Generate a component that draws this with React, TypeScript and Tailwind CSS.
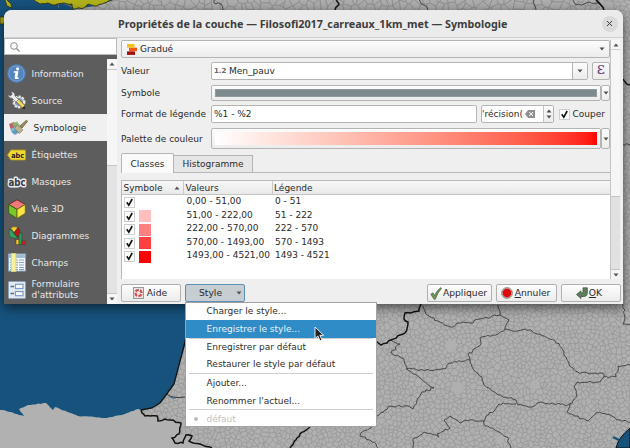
import React from "react";

type Pt = [number, number];

/* Small deterministic generator, so that the map is the same at each load. */
function seeded(seed: number) {
  let s = seed;
  return () => {
    s = (s * 1664525 + 1013904223) % 4294967296;
    return s / 4294967296;
  };
}

/* Part of a polygon that is nearer to a than to b. */
function nearer(poly: Pt[], a: Pt, b: Pt) {
  const nx = b[0] - a[0];
  const ny = b[1] - a[1];
  const c = (nx * (a[0] + b[0]) + ny * (a[1] + b[1])) / 2;
  const out: Pt[] = [];
  for (let i = 0; i < poly.length; i++) {
    const p = poly[i];
    const q = poly[(i + 1) % poly.length];
    const dp = nx * p[0] + ny * p[1] - c;
    const dq = nx * q[0] + ny * q[1] - c;
    if (dp <= 0) out.push(p);
    if (dp * dq < 0) {
      const t = dp / (dp - dq);
      out.push([p[0] + (q[0] - p[0]) * t, p[1] + (q[1] - p[1]) * t]);
    }
  }
  return out;
}

/* Voronoi cells of a grid of shifted seeds. */
function mesh(x0: number, y0: number, x1: number, y1: number, size: number, seed: number) {
  const rnd = seeded(seed);
  const cols = Math.ceil((x1 - x0) / size) + 1;
  const rows = Math.ceil((y1 - y0) / size) + 1;
  const pts: (Pt | null)[][] = [];
  for (let r = 0; r < rows; r++) {
    const line: (Pt | null)[] = [];
    for (let c = 0; c < cols; c++) {
      const x = x0 + (c + rnd()) * size;
      const y = y0 + (r + rnd()) * size;
      line.push(rnd() < 0.16 ? null : [x, y]);
    }
    pts.push(line);
  }
  let d = "";
  for (let r = 0; r < rows; r++) {
    for (let c = 0; c < cols; c++) {
      const a = pts[r][c];
      if (!a) continue;
      const h = size * 2;
      let poly: Pt[] = [[a[0] - h, a[1] - h], [a[0] + h, a[1] - h], [a[0] + h, a[1] + h], [a[0] - h, a[1] + h]];
      for (let i = -3; i <= 3; i++) {
        for (let j = -3; j <= 3; j++) {
          const b = pts[r + i]?.[c + j];
          if (b && (i || j)) poly = nearer(poly, a, b);
        }
      }
      if (poly.length > 2) d += "M" + poly.map((p) => `${p[0].toFixed(1)} ${p[1].toFixed(1)}`).join("L") + "Z";
    }
  }
  return d;
}

/* Polyline broken in short uneven steps, for borders and coasts. */
function rough(pts: Pt[], amp: number, seed: number) {
  const rnd = seeded(seed);
  let d = `M${pts[0][0]} ${pts[0][1]}`;
  for (let i = 1; i < pts.length; i++) {
    const [ax, ay] = pts[i - 1];
    const [bx, by] = pts[i];
    const n = Math.max(1, Math.round(Math.hypot(bx - ax, by - ay) / 2.6));
    for (let k = 1; k <= n; k++) {
      const j = k === n ? 0 : amp;
      d += `L${(ax + ((bx - ax) * k) / n + (rnd() - 0.5) * j).toFixed(1)} ${(ay + ((by - ay) * k) / n + (rnd() - 0.5) * j).toFixed(1)}`;
    }
  }
  return d;
}

const communes = mesh(135, 300, 634, 452, 4.3, 7) + mesh(612, -6, 636, 300, 4.3, 11);
const northCommunes = mesh(72, -10, 612, 18, 7, 5);

const departments: Pt[][] = [
  [[423, 306], [426, 314], [438, 321], [450, 327], [463, 322], [470, 323], [480, 319], [500, 315], [498, 305]],
  [[500, 315], [509, 320], [505, 329], [498, 334], [480, 338], [481, 344], [468, 355], [470, 360], [449, 363], [445, 369], [435, 370], [406, 369]],
  [[505, 329], [512, 331], [525, 329], [540, 334], [555, 341], [563, 350], [569, 364], [578, 372], [590, 374], [602, 373], [604, 377], [616, 377], [618, 366], [630, 365]],
  [[470, 360], [472, 367], [482, 377], [484, 385], [498, 395], [516, 400], [518, 405], [532, 407], [540, 402], [568, 405], [571, 403]],
  [[604, 377], [600, 382], [577, 382], [574, 386], [577, 395], [572, 403], [567, 412], [575, 416], [588, 421], [596, 413], [600, 412], [612, 416], [620, 420], [630, 422]],
  [[516, 404], [499, 404], [494, 411], [486, 416], [484, 421], [465, 420], [460, 423], [455, 419], [450, 416], [444, 420], [450, 428], [444, 431], [437, 434], [439, 437], [432, 434], [424, 432], [414, 438], [413, 448]],
  [[484, 421], [485, 426], [497, 431], [507, 437], [511, 448]],
  [[391, 340], [400, 344], [391, 353], [404, 359], [407, 369], [434, 388], [422, 392], [413, 409], [410, 407], [391, 406], [377, 416]],
  [[623, 304], [625, 318], [623, 324], [630, 324]],
  [[372, 427], [362, 432], [360, 436], [370, 440], [376, 444], [378, 448]],
  [[214, 0], [214, 3], [221, 4], [223, 10]],
  [[419, 0], [424, 5], [428, 10]],
  [[534, 0], [534, 4], [536, 10]],
  [[573, 0], [576, 5], [584, 4], [589, 2], [597, 3], [604, 8]],
  [[620, 144], [630, 145]],
];

const heavyBorders: Pt[][] = [
  [[421, 304], [419, 311], [405, 313], [404, 319], [408, 322], [405, 333], [400, 335], [391, 340], [387, 343], [381, 345], [376, 341]],
  [[310, 427], [300, 434], [290, 448]],
  [[141, 410], [145, 416], [157, 416], [158, 421], [165, 419], [181, 423], [179, 434], [172, 438], [175, 443], [183, 443], [186, 435], [192, 436], [189, 441], [200, 444], [212, 448]],
  [[336, 0], [339, 4], [335, 10]],
  [[596, 0], [601, 5], [604, 10]],
  [[623, 79], [626, 83], [630, 85]],
];

const spain: Pt[] = [[0, 410], [10, 412], [24, 416], [19, 409], [28, 405], [46, 403], [53, 410], [55, 407], [78, 416], [107, 418], [122, 415], [138, 409], [141, 410]];
const brittany: Pt[] = [[34, 0], [40, 4], [48, 3], [55, 5], [64, 3], [72, 4], [73, 9], [84, 8], [88, 4], [97, 6], [104, 3], [112, 0]];

function MapCanvas() {
  return (
    <svg className="absolute inset-0" width="630" height="448" viewBox="0 0 630 448">
      <defs>
        <clipPath id="mainland">
          <path d="M186 300V342L179 365L174 384L166 395L160 403L152 408L141 410L145 416L157 416L158 421L165 419L181 423L179 434L186 435L200 444L212 448H630V0H600V300Z" />
        </clipPath>
      </defs>
      <rect width="630" height="448" fill="#16527c" />
      <path d="M74 14V9L96 6L114 0H630V16H74Z" fill="#adadad" />
      <path d={northCommunes} stroke="#8b8b8b" strokeWidth=".5" fill="none" />
      <path d="M30 0H36L43 5L74 11L66 14H0V0Z" fill="#16527c" />
      <path d={rough(brittany, 1.5, 3)} fill="#b0b01c" stroke="#33330c" strokeWidth=".9" />
      <path d="M5 0L7 6L12 8L11 4L7 0M0 17H5L4 24H0Z" fill="#b0b01c" stroke="#33330c" strokeWidth=".8" />
      <path d={rough(spain, 0.9, 9) + "L181 423L212 448H0Z"} fill="#b1b1b1" />
      <path
        d="M186 300V342L179 365L174 384L166 395L160 403L152 408L141 410L145 416L157 416L158 421L165 419L181 423L179 434L172 438L175 443L183 443L200 444L212 448H630V0H600V300Z"
        fill="#b0b0b0"
      />
      <g clipPath="url(#mainland)">
        <path d={communes} stroke="#929292" strokeWidth=".36" fill="none" />
        {[[451, 346, 6], [458, 388, 6], [535, 385, 5], [484, 343, 4], [500, 440, 4]].map(([x, y, r]) => (
          <circle key={x} cx={x} cy={y} r={r} fill="#b0b0b0" />
        ))}
      </g>
      {departments.map((p, i) => (
        <path key={i} d={rough(p, 2.2, i + 20)} stroke="#3d3d3d" strokeWidth=".9" fill="none" />
      ))}
      {heavyBorders.map((p, i) => (
        <path key={i} d={rough(p, 1.6, i + 50)} stroke="#121212" strokeWidth="1.5" fill="none" />
      ))}
      <path d="M186 338L179 365L174 384L166 395L160 403L152 408L141 410" stroke="#121212" strokeWidth="1.3" fill="none" />
      <path d="M167 394Q172 399 185 397" stroke="#222" strokeWidth=".8" fill="none" />
      <path d="M169 396Q172 399 176 398" stroke="#2f6a90" strokeWidth=".9" fill="none" />
      <path d="M630 428Q618 438 616 448H630Z" fill="#16527c" stroke="#121212" strokeWidth="1" />
      <path d="M613 437L619 440" stroke="#16527c" strokeWidth="2.5" />
    </svg>
  );
}

function Caret({ up = false }: { up?: boolean }) {
  return (
    <svg width="6" height="4" viewBox="0 0 6 4" className="shrink-0">
      <path d={up ? "M.5 3.500L3 .5L5.500 3.500Z" : "M.5 .5H5.500L3 3.500Z"} fill="#505050" />
    </svg>
  );
}

function Check() {
  return (
    <span className="flex size-[11px] shrink-0 items-center justify-center border border-[#cfcfcf] bg-white">
      <svg width="9" height="9" viewBox="0 0 9 9">
        <path d="M1.800 4.300L3.800 7.200L7.200 1" fill="none" stroke="#111" strokeWidth="1.600" />
      </svg>
    </span>
  );
}

function InfoIcon() {
  return (
    <svg width="19" height="19" viewBox="0 0 19 19">
      <circle cx="9.500" cy="9.500" r="9" fill="#5585bd" stroke="#4a78b0" />
      <circle cx="9.500" cy="9.500" r="7.600" fill="none" stroke="#85aeda" strokeWidth=".7" />
      <circle cx="10.600" cy="4.800" r="1.600" fill="#fff" />
      <path d="M6.800 8H10.300L8.800 14.200H11.500" fill="none" stroke="#fff" strokeWidth="1.700" />
      <path d="M10 7.500L8.800 14" stroke="#fff" strokeWidth="2.600" />
    </svg>
  );
}

function SourceIcon() {
  return (
    <svg width="19" height="19" viewBox="0 0 19 19">
      <circle cx="12" cy="11" r="5.600" fill="#7f9dc0" stroke="#e6e6e0" strokeWidth="1.800" strokeDasharray="2.400 1.200" />
      <circle cx="12" cy="11" r="4.600" fill="none" stroke="#e6e6e0" strokeWidth="1" />
      <path d="M10 9L16.500 15.500" stroke="#6b5a1c" strokeWidth="4.200" />
      <path d="M10 9L16.500 15.500" stroke="#f3d868" strokeWidth="3" />
      <path d="M1 3.500L3.500 5L5.200 3.300L4 .8Q8 .8 8 5L11.500 8.500L9 11L5.500 7.500Q1.500 7.500 1 3.500Z" fill="#ededed" stroke="#555" strokeWidth=".5" />
      <path d="M15 17.500L18 18L17.500 15Z" fill="#222" />
    </svg>
  );
}

function BrushIcon() {
  return (
    <svg width="20" height="17" viewBox="0 0 20 17">
      <path d="M1 5L6 3L10 12L4 14Z" fill="#c35d6b" />
      <path d="M4 4.500L9 2.500L13 8L8 12Z" fill="#86b56d" opacity=".9" />
      <path d="M2 10L7 8L12 12L6 15.800Z" fill="#7fb7d5" />
      <path d="M4 13L8 10L12 13L7 16Z" fill="#4d8fb8" opacity=".7" />
      <path d="M9 5.500L15 11L11.500 14.500L6.500 9.500Z" fill="#b9b48d" stroke="#777453" strokeWidth=".6" />
      <path d="M12 7L18.500 1.200L19.500 2.300L14 9Z" fill="#9c9060" stroke="#6d6440" strokeWidth=".9" />
    </svg>
  );
}

function LabelIcon() {
  return (
    <svg width="19" height="12" viewBox="0 0 19 12">
      <path d="M.5 6L4 1H17.500Q18.500 1 18.500 2V10Q18.500 11 17.500 11H4Z" fill="#f0d932" stroke="#b79c13" strokeWidth=".8" />
      <text x="4.200" y="8.600" fontSize="7.200" fontWeight="700" fontFamily="DejaVu Sans" textLength="13" lengthAdjust="spacingAndGlyphs" fill="#222">abc</text>
    </svg>
  );
}

function MaskIcon() {
  return (
    <svg width="20" height="14" viewBox="0 0 20 14">
      <text x="1.500" y="10.800" fontSize="9.800" fontWeight="700" fontFamily="DejaVu Sans" textLength="17" lengthAdjust="spacingAndGlyphs" fill="#36393f" stroke="#e8eaf2" strokeWidth="3" strokeLinejoin="round" paintOrder="stroke">abc</text>
    </svg>
  );
}

function CubeIcon() {
  return (
    <svg width="18" height="20" viewBox="0 0 18 20">
      <g strokeLinejoin="round" strokeWidth=".9">
        <path d="M9 .8L17.300 5.500L9 10.500L.7 5.500Z" fill="#f07a7a" stroke="#6e2424" />
        <path d="M.7 5.500L9 10.500V19.400L.7 14.300Z" fill="#79c72c" stroke="#335c10" />
        <path d="M17.300 5.500L9 10.500V19.400L17.300 14.300Z" fill="#f6e545" stroke="#75670f" />
      </g>
    </svg>
  );
}

function ChartIcon() {
  return (
    <svg width="18" height="19" viewBox="0 0 18 19">
      <g stroke="#333" strokeWidth=".5">
        <path d="M6 6.500L2.500 2Q6 -.5 10 1.500Z" fill="#f4ce25" />
        <path d="M6 7L10.500 1.800Q13.500 6 10 11Z" fill="#c81313" />
        <path d="M5.500 7L9.500 12Q3 13.500 1 8.500Q.3 5 2.200 2.800Z" fill="#2fa55b" />
        <rect x="8" y="13.500" width="3" height="5" fill="#f4ce25" />
        <rect x="11" y="7" width="3" height="11.500" fill="#23a04b" />
        <rect x="14" y="15" width="3.500" height="3.500" fill="#d62222" />
      </g>
    </svg>
  );
}

function FieldsIcon() {
  return (
    <svg width="18" height="19" viewBox="0 0 18 19">
      <rect x=".5" y="1" width="17" height="17" fill="#f4f8fb" stroke="#86a6c4" />
      <rect x="1" y="1.500" width="16" height="3.500" fill="#9fbcd8" />
      <path d="M2 7H16M2 9.500H16M2 12H16M2 14.500H16M2 16.500H16" stroke="#86a6c8" strokeWidth="1.200" />
      <path d="M10.500 5V18" stroke="#fff" strokeWidth="1" />
      <rect x="3.300" y=".3" width="4.600" height="18.400" fill="#f8f29a" stroke="#d6cf6a" strokeWidth=".7" />
    </svg>
  );
}

function FormIcon() {
  return (
    <svg width="18" height="18" viewBox="0 0 18 18">
      <rect x=".5" y=".5" width="17" height="17" rx="1" fill="#e2eaf3" stroke="#8aa3bd" />
      <path d="M2.500 5.500H6M2.500 12.500H6" stroke="#5a6c80" strokeWidth="1.400" />
      <rect x="7.500" y="3.300" width="7.500" height="4.200" fill="#fff" stroke="#7b9cc2" strokeWidth="1.200" />
      <rect x="7.500" y="10.500" width="7.500" height="4.200" fill="#fff" stroke="#7b9cc2" strokeWidth="1.200" />
    </svg>
  );
}

const sections = [
  { name: "Information", Icon: InfoIcon },
  { name: "Source", Icon: SourceIcon },
  { name: "Symbologie", Icon: BrushIcon, active: true },
  { name: "Étiquettes", Icon: LabelIcon },
  { name: "Masques", Icon: MaskIcon },
  { name: "Vue 3D", Icon: CubeIcon },
  { name: "Diagrammes", Icon: ChartIcon },
  { name: "Champs", Icon: FieldsIcon },
];

function Sidebar() {
  return (
    <aside className="flex w-[113px] shrink-0 flex-col bg-[#5d5d5d]">
      <div className="flex h-[17px] shrink-0 items-center border border-[#b9b9b9] bg-white pl-[5px]">
        <svg width="10" height="10" viewBox="0 0 10 10">
          <circle cx="4" cy="4" r="3.300" fill="none" stroke="#8b8b8b" />
          <path d="M6.500 6.500L9.500 9.500" stroke="#8b8b8b" strokeWidth="1.200" />
        </svg>
      </div>
      <div className="flex flex-1">
        <nav className="flex w-[103px] flex-col pt-[5px] text-[#e8e8e8]">
          {sections.map(({ name, Icon, active }) => (
            <div
              key={name}
              className={
                active
                  ? "flex h-[27px] items-center bg-[#f0f0f0] pl-px text-[#2b2b2b]"
                  : "flex h-[27px] items-center"
              }
            >
              <span className="flex w-[25px] justify-center">
                <Icon />
              </span>
              <span className={active ? "pl-[3.500px]" : "pl-[2.500px]"}>{name}</span>
            </div>
          ))}
          <div className="flex h-[28px] items-center">
            <span className="flex w-[25px] justify-center">
              <FormIcon />
            </span>
            <span className="pl-[2.500px] leading-[11px]">
              Formulaire
              <br />
              d'attributs
            </span>
          </div>
        </nav>
        <div className="mt-[4px] flex w-[10px] flex-col bg-[#e3e3e3]">
          <div className="flex h-[11px] items-center justify-center border-b border-[#c4c4c4] bg-[#f6f6f6]">
            <Caret up />
          </div>
          <div className="h-[96px] border-b border-[#c4c4c4] bg-[#f6f6f6]" />
          <div className="flex-1" />
          <div className="flex h-[11px] items-center justify-center border-t border-[#c4c4c4] bg-[#f6f6f6]">
            <Caret />
          </div>
        </div>
      </div>
    </aside>
  );
}

const classes = [
  { color: "bg-white", values: "0,00 - 51,00", legend: "0 - 51" },
  { color: "bg-[#ffbfbf]", values: "51,00 - 222,00", legend: "51 - 222" },
  { color: "bg-[#ff8080]", values: "222,00 - 570,00", legend: "222 - 570" },
  { color: "bg-[#ff4040]", values: "570,00 - 1493,00", legend: "570 - 1493" },
  { color: "bg-[#ff0000]", values: "1493,00 - 4521,00", legend: "1493 - 4521" },
];

function ClassTable() {
  return (
    <div className="mt-[7px] flex h-[99px] flex-col border-t border-l border-[#b8b8b8] bg-white">
      <div className="flex h-[14px] shrink-0 items-center border-b border-[#c4c4c4] bg-linear-to-b from-[#f8f8f8] to-[#e9e9e9]">
        <div className="flex h-full w-[62px] items-center justify-between border-r border-[#c9c9c9] pr-[3px] pl-[1.500px]">
          Symbole
          <Caret up />
        </div>
        <div className="flex h-full w-[89px] items-center border-r border-[#c9c9c9] pl-[1.500px]">Valeurs</div>
        <div className="pl-[1px]">Légende</div>
      </div>
      <div>
        {classes.map((c) => (
          <div key={c.legend} className="flex h-[13.500px] items-center">
            <div className="flex w-[64.500px] items-center pt-[2px] pl-[1.500px]">
              <Check />
              <span className={`ml-[4.500px] h-[12px] w-[12px] ${c.color}`} />
            </div>
            <div className="-mt-px w-[88.500px] whitespace-nowrap">{c.values}</div>
            <div className="-mt-px">{c.legend}</div>
          </div>
        ))}
      </div>
    </div>
  );
}

const field = "rounded-[2px] border border-[#b4b4b4]";
const raised = "bg-linear-to-b from-[#fcfcfc] to-[#ececec]";

function ColorButton({ children, height }: { children: React.ReactNode; height: string }) {
  return (
    <div className={`flex ${height}`}>
      <div className={`flex w-[390px] p-[3px] ${field} ${raised}`}>{children}</div>
      <div className={`flex w-[9px] items-center justify-center ${field} ${raised}`}>
        <Caret />
      </div>
    </div>
  );
}

function Label({ children }: { children: React.ReactNode }) {
  return <span className="w-[90px] shrink-0">{children}</span>;
}

function Symbology() {
  return (
    <div className="w-[489px] pt-[2px]">
      <div className={`flex h-[18px] items-center justify-between pr-[4px] pl-[5px] ${field} ${raised}`}>
        <span className="flex items-center gap-[3px]">
          <svg width="10" height="11" viewBox="0 0 10 11">
            <rect x="0" y="0" width="7.500" height="3.500" fill="#f6c312" />
            <rect x="2" y="3.700" width="8" height="3.500" fill="#ee5a17" />
            <rect x="0" y="7.400" width="8" height="3.500" fill="#a50f0a" />
          </svg>
          Gradué
        </span>
        <Caret />
      </div>

      <div className="mt-[4px] flex h-[18px] items-center">
        <Label>Valeur</Label>
        <div className={`flex h-full w-[377px] bg-white ${field}`}>
          <span className="flex flex-1 items-center pl-[2px]">
            <span className="mr-[2px] w-[13px] text-[7px] font-bold text-[#666]">1.2</span>
            Men_pauv
          </span>
          <span className={`flex w-[15px] items-center justify-center border-l border-[#b4b4b4] ${raised}`}>
            <Caret />
          </span>
        </div>
        <div className={`ml-[4px] flex h-full w-[18px] items-center justify-center font-['DejaVu_Serif',serif] text-[16px] text-[#6d3f7c] ${field} ${raised}`}>
          <span className="-mt-[4px]">ε</span>
        </div>
      </div>

      <div className="mt-[5px] flex items-center">
        <Label>Symbole</Label>
        <ColorButton height="h-[16px]">
          <div className="flex-1 border border-[#8f9b9e] bg-[#7d8b8f]" />
        </ColorButton>
      </div>

      <div className="mt-[4px] flex h-[18px] items-center">
        <Label>Format de légende</Label>
        <div className={`flex h-full w-[266px] items-center bg-white pl-[2px] ${field}`}>%1 - %2</div>
        <div className={`ml-[4px] flex h-full w-[73px] bg-white ${field}`}>
          <span className="flex flex-1 items-center">
            <span className="flex w-[41px] justify-center overflow-hidden whitespace-nowrap">
              <span>'récision(</span>
            </span>
            <svg width="10" height="8" viewBox="0 0 10 8" className="ml-[2px]">
              <path d="M0 4L3 0H10V8H3Z" fill="#909090" />
              <path d="M4.300 2L8 6M8 2L4.300 6" stroke="#fff" strokeWidth="1" />
            </svg>
          </span>
          <span className={`flex w-[10px] flex-col items-center justify-center gap-[2px] border-l border-[#c4c4c4] ${raised}`}>
            <Caret up />
            <Caret />
          </span>
        </div>
        <span className="ml-[4.500px] flex items-center gap-[3px]">
          <Check />
          Couper
        </span>
      </div>

      <div className="mt-[5px] flex items-center">
        <Label>Palette de couleur</Label>
        <ColorButton height="h-[21px]">
          <div className="flex-1 bg-linear-to-r from-white to-[#ff0000]" />
        </ColorButton>
      </div>

      <div className="mt-[4px] flex h-[20px] items-end border-b border-[#b8b8b8]">
        <div className="-mb-px flex h-[20px] w-[53px] items-center justify-center rounded-t-[2px] border border-b-0 border-[#b4b4b4] bg-[#fafafa]">
          Classes
        </div>
        <div className="flex h-[17px] w-[79px] items-center justify-center border border-b-0 border-l-0 border-[#b4b4b4] bg-[#e6e6e6]">
          Histogramme
        </div>
      </div>

      <ClassTable />
    </div>
  );
}

function HelpIcon() {
  return (
    <svg width="11" height="12" viewBox="0 0 11 12">
      <rect x=".5" y=".5" width="10" height="11" fill="#e4e4e4" stroke="#999" />
      <circle cx="5.500" cy="6" r="3" fill="none" stroke="#d84a4a" strokeWidth="2" />
      <circle cx="5.500" cy="6" r="3" fill="none" stroke="#fff" strokeWidth="2" strokeDasharray="1.200 3.510" />
    </svg>
  );
}

function ApplyIcon() {
  return (
    <svg width="12" height="13" viewBox="0 0 12 13">
      <path d="M.8 7.200L3 5.800L4.600 8.600Q7 3 10.800 .6L11.500 1.500Q7.500 5.500 5.300 12.300H4Z" fill="#6f9460" stroke="#4b6b40" strokeWidth=".7" />
    </svg>
  );
}

function CancelIcon() {
  return (
    <svg width="12" height="12" viewBox="0 0 12 12">
      <circle cx="6" cy="6" r="5.500" fill="#b7b0ac" stroke="#8c8581" strokeWidth=".7" />
      <path d="M4.300 1.800H7.700L10.200 4.300V7.700L7.700 10.200H4.300L1.800 7.700V4.300Z" fill="#dd0a0a" />
    </svg>
  );
}

function OkIcon() {
  return (
    <svg width="12" height="12" viewBox="0 0 12 12">
      <path d="M.5 7.500L5 3.800V6H7V.8H11.300V6.500Q11 9.500 8 9.500H5V11.500Z" fill="#5f7d5c" stroke="#435a41" strokeWidth=".8" />
    </svg>
  );
}

const button = "flex h-[18px] items-center justify-center rounded-[2px] border border-[#b0b0b0] bg-linear-to-b from-[#fdfdfd] to-[#ececec] text-[9.200px]";

const menuItem = "flex h-[17.300px] items-center pl-[20.500px]";

function StyleMenu() {
  return (
    <div className="absolute top-[302px] left-[185px] h-[125px] w-[192px] border border-[#a2a2a2] bg-white text-[#2d2d2d]">
      <div className="flex h-[17px] items-center pb-px pl-[20.500px]">Charger le style...</div>
      <div className="flex h-[17.500px] items-center bg-[#308cc6] pl-[20.500px] text-[#e8f2f9]">Enregistrer le style...</div>
      <div className="mx-[3px] border-t border-[#cfcfcf]" />
      <div className={menuItem}>Enregistrer par défaut</div>
      <div className={menuItem}>Restaurer le style par défaut</div>
      <div className="mx-[3px] border-t border-[#cfcfcf]" />
      <div className={menuItem + " mt-[0.500px]"}>Ajouter...</div>
      <div className={menuItem}>Renommer l'actuel...</div>
      <div className="mx-[3px] border-t border-[#cfcfcf]" />
      <div className="flex h-[17px] items-center text-[#c0c0c0]">
        <span className="ml-[8px] size-[4px] rounded-full bg-[#bdbdbd]" />
        <span className="ml-[8.500px]">défaut</span>
      </div>
    </div>
  );
}

export default function App() {
  return (
    <div className="relative h-[448px] w-[630px] overflow-hidden font-['DejaVu_Sans',sans-serif] text-[9px] leading-[12px] text-[#2a2a2a]">
      <MapCanvas />
      <div className="relative pt-[10px] pl-[4px]">
        <div className="flex h-[294px] w-[619px] flex-col overflow-hidden rounded-t-[8px] bg-[#efefef] shadow-[0_3px_12px_rgba(0,0,0,0.6)]">
          <header className="flex h-[28px] shrink-0 items-center border-b border-[#cfcfcf] bg-[#ebebeb]">
            <h1 className="w-[597.500px] pl-[20px] text-center font-['Noto_Sans',sans-serif] text-[10.780px] font-bold whitespace-nowrap text-[#3d3d3d]">
              Propriétés de la couche — Filosofi2017_carreaux_1km_met — Symbologie
            </h1>
            <span className="flex size-[16px] shrink-0 items-center justify-center rounded-full bg-[#dadada]">
              <svg width="7" height="7" viewBox="0 0 7 7">
                <path d="M1 1L6 6M6 1L1 6" stroke="#3d3d3d" strokeWidth="1" />
              </svg>
            </span>
          </header>
          <div className="flex flex-1">
            <Sidebar />
            <main className="flex flex-1 flex-col pl-[4px]">
              <div className="flex h-[241px]">
                <Symbology />
                <div className="mt-[2px] flex w-[10px] flex-col border-l border-[#c4c4c4] bg-[#e1e1e1]">
                  <div className="flex h-[10px] items-center justify-center border-b border-[#d0d0d0] bg-[#f6f6f6]">
                    <Caret up />
                  </div>
                  <div className="h-[147px] border-b border-[#c4c4c4] bg-[#f6f6f6]" />
                  <div className="flex-1" />
                  <div className="flex h-[10px] items-center justify-center border-t border-[#c4c4c4] bg-[#f6f6f6]">
                    <Caret />
                  </div>
                </div>
              </div>
              <div className="mt-[5px] flex w-[500px]">
                <button className={`${button} w-[60px] gap-[3px] pr-[2px]`}>
                  <HelpIcon />
                  Aide
                </button>
                <button className="ml-[4px] flex h-[18px] w-[60px] items-center justify-between rounded-[2px] border border-[#5b8fb5] bg-[#c6cdd3] pr-[2px] pl-[13px]">
                  <span className="text-[9.200px]">Style</span>
                  <Caret />
                </button>
                <span className="flex-1" />
                <button className={`${button} w-[65px] gap-px pr-[2px]`}>
                  <ApplyIcon />
                  Appliquer
                </button>
                <button className={`${button} ml-[4px] w-[61px] gap-[2px] pr-[2px]`}>
                  <CancelIcon />
                  <span>
                    <u>A</u>nnuler
                  </span>
                </button>
                <button className={`${button} ml-[4px] w-[60px] gap-px pr-[4px]`}>
                  <OkIcon />
                  <span>
                    <u>O</u>K
                  </span>
                </button>
              </div>
            </main>
          </div>
        </div>
      </div>
      <StyleMenu />
      <svg className="absolute top-[326px] left-[314px]" width="11" height="16" viewBox="0 0 11 16">
        <path d="M1 1V12.500L3.800 10L6 14.800L8 13.800L5.900 9.300H9.600Z" fill="#222" stroke="#fff" strokeWidth=".9" />
      </svg>
    </div>
  );
}
